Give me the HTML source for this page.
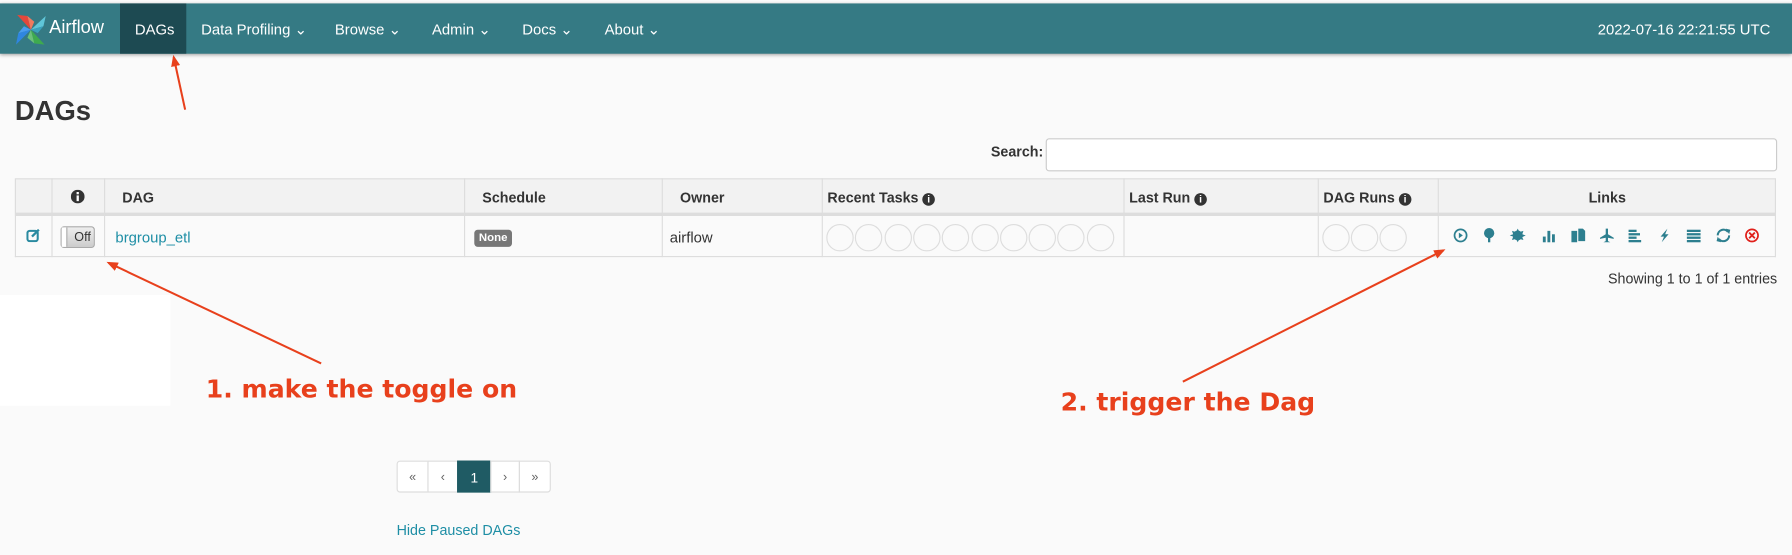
<!DOCTYPE html>
<html><head><meta charset="utf-8">
<style>
html,body{margin:0;padding:0;width:1792px;height:555px;overflow:hidden;background:#fafafa;font-family:"Liberation Sans",Arial,sans-serif}
#w{position:absolute;left:0;top:0;width:1568px;height:486px;transform:scale(1.142857);transform-origin:0 0;background:#fafafa}
.a{position:absolute}
.nav{left:0;top:3px;width:1568px;height:44px;background:#357a84;box-shadow:0 1px 3px rgba(0,0,0,.35)}
.ni{color:#fff;font-size:13px;top:18px}
.th{font-size:12.5px;font-weight:bold;color:#333;top:166px}
.c{position:absolute;width:22px;height:22px;border:1px solid #ddd;border-radius:50%;top:196px;background:#fafafa}
.pg{position:absolute;top:403px;height:28px;border:1px solid #ddd;background:#fff;color:#666;font-size:11px;text-align:center;line-height:28px;box-sizing:border-box}
.red{color:#e8401c;font-weight:bold;font-size:22px;font-family:"DejaVu Sans",sans-serif}
</style></head><body><div id="w">
<div class="a nav"></div>
<svg class="a" style="left:12px;top:11px" width="30" height="30" viewBox="0 0 30 30">
<path d="M15 15 L3 2 L12 3 Z" fill="#e4473a"/><path d="M15 15 L28 3 L26 12 Z" fill="#5fc6d8"/><path d="M15 15 L27 28 L18 27 Z" fill="#3eaa4f"/><path d="M15 15 L2 28 L4 18 Z" fill="#2f86e0"/>
<path d="M15 15 L12 3 L18 8 Z" fill="#f07a5f"/><path d="M15 15 L26 12 L21 18 Z" fill="#3aa2bd"/><path d="M15 15 L18 27 L12 22 Z" fill="#6cc07a"/><path d="M15 15 L4 18 L9 12 Z" fill="#4a9df0"/>
</svg>
<div class="a" style="left:43px;top:16px;color:#fff;font-size:16px">Airflow</div>
<div class="a" style="left:105px;top:3px;width:58px;height:44px;background:#1d4a52"></div>
<div class="a ni" style="left:118px">DAGs</div>
<div class="a ni" style="left:176px">Data Profiling ⌄</div>
<div class="a ni" style="left:293px">Browse ⌄</div>
<div class="a ni" style="left:378px">Admin ⌄</div>
<div class="a ni" style="left:457px">Docs ⌄</div>
<div class="a ni" style="left:529px">About ⌄</div>
<div class="a ni" style="left:1398px">2022-07-16 22:21:55 UTC</div>

<div class="a" style="left:13px;top:84px;font-size:24px;font-weight:bold;color:#333">DAGs</div>
<div class="a" style="left:867px;top:126px;font-size:12.5px;font-weight:bold;color:#333">Search:</div>
<div class="a" style="left:915px;top:121px;width:638px;height:27px;border:1px solid #ccc;border-radius:3px;background:#fff"></div>

<div class="a" style="left:13px;top:156px;width:1541px;height:33px;background:#f2f2f2;border:1px solid #ddd;border-bottom:3px solid #ddd;box-sizing:border-box"></div>
<div class="a" style="left:13px;top:189px;width:1541px;height:36px;background:#fafafa;border:1px solid #ddd;border-top:0;box-sizing:border-box"></div>
<div class="a" style="left:45px;top:156px;width:1px;height:69px;background:#ddd"></div>
<div class="a" style="left:91px;top:156px;width:1px;height:69px;background:#ddd"></div>
<div class="a" style="left:406px;top:156px;width:1px;height:69px;background:#ddd"></div>
<div class="a" style="left:579px;top:156px;width:1px;height:69px;background:#ddd"></div>
<div class="a" style="left:719px;top:156px;width:1px;height:69px;background:#ddd"></div>
<div class="a" style="left:983px;top:156px;width:1px;height:69px;background:#ddd"></div>
<div class="a" style="left:1153px;top:156px;width:1px;height:69px;background:#ddd"></div>
<div class="a" style="left:1258px;top:156px;width:1px;height:69px;background:#ddd"></div>
<svg class="a" style="left:62px;top:166px" width="12" height="12"><circle cx="6" cy="6" r="6" fill="#333"/><rect x="5" y="5" width="2" height="5" fill="#fff"/><rect x="5" y="2" width="2" height="2" fill="#fff"/></svg>
<div class="a th" style="left:107px">DAG</div>
<div class="a th" style="left:422px">Schedule</div>
<div class="a th" style="left:595px">Owner</div>
<div class="a th" style="left:724px">Recent Tasks <span style="display:inline-block;width:11px;height:11px;border-radius:50%;background:#333;color:#fff;font-size:9px;text-align:center;line-height:11px">i</span></div>
<div class="a th" style="left:988px">Last Run <span style="display:inline-block;width:11px;height:11px;border-radius:50%;background:#333;color:#fff;font-size:9px;text-align:center;line-height:11px">i</span></div>
<div class="a th" style="left:1158px">DAG Runs <span style="display:inline-block;width:11px;height:11px;border-radius:50%;background:#333;color:#fff;font-size:9px;text-align:center;line-height:11px">i</span></div>
<div class="a th" style="left:1390px">Links</div>

<svg class="a" style="left:23px;top:200px" width="13" height="12"><rect x="1" y="2" width="9" height="9" rx="2" fill="none" stroke="#2a8aa0" stroke-width="1.8"/><path d="M5 7 L11 1" stroke="#2a8aa0" stroke-width="2"/></svg>
<div class="a" style="left:53px;top:198px;width:30px;height:19px;border:1px solid #aaa;border-radius:3px;background:linear-gradient(#eee,#ccc);box-sizing:border-box"><div style="position:absolute;left:0;top:0;width:4px;height:17px;background:#fff;border-right:1px solid #aaa"></div><span style="position:absolute;left:11px;top:3px;font-size:11px;color:#333">Off</span></div>
<div class="a" style="left:101px;top:200px;font-size:13px;color:#1e8ea5">brgroup_etl</div>
<div class="a" style="left:415px;top:201px;width:33px;height:15px;background:#777;border-radius:3px;color:#fff;font-size:10px;font-weight:bold;text-align:center;line-height:15px">None</div>
<div class="a" style="left:586px;top:200px;font-size:13px;color:#333">airflow</div>
<div class="c" style="left:723px"></div><div class="c" style="left:748px"></div><div class="c" style="left:774px"></div><div class="c" style="left:799px"></div><div class="c" style="left:824px"></div><div class="c" style="left:850px"></div><div class="c" style="left:875px"></div><div class="c" style="left:900px"></div><div class="c" style="left:925px"></div><div class="c" style="left:951px"></div>
<div class="c" style="left:1157px"></div><div class="c" style="left:1182px"></div><div class="c" style="left:1207px"></div>

<svg class="a" style="left:1270px;top:199px" width="270" height="14" viewBox="0 0 270 14" fill="#2d7f8f">
<circle cx="8" cy="7" r="5.3" fill="none" stroke="#2d7f8f" stroke-width="1.5"/><path d="M6.5 4.5 L10 7 L6.5 9.5Z"/>
<circle cx="33" cy="5" r="4.5"/><rect x="32" y="8" width="2" height="5"/>
<circle cx="58" cy="7" r="4.3"/><path d="M58 1 L59.5 4 L63 3 L62 6 L65 7 L62 8.5 L63 11 L59.5 10 L58 13 L56.5 10 L53 11 L54 8 L51 7 L54 6 L53 3 L56.5 4Z"/>
<rect x="80" y="8" width="2.5" height="5"/><rect x="84" y="3" width="2.5" height="10"/><rect x="88" y="6" width="2.5" height="7"/>
<path d="M105 3 L110 3 L110 13 L105 13Z"/><path d="M111 1 L115 1 L117 3 L117 12 L111 12Z"/>
<path d="M135 1 L137 1 L137 6 L142 9 L142 10 L137 9 L137 12 L139 13 L133 13 L135 12 L135 9 L130 10 L130 9 L135 6Z"/>
<rect x="155" y="2" width="7" height="2"/><rect x="155" y="5" width="10" height="2"/><rect x="155" y="8" width="7" height="2"/><rect x="155" y="11" width="11" height="2"/>
<path d="M189 1 L183 8 L186 8 L184 13 L190 6 L187 6Z"/>
<rect x="206" y="2" width="12" height="2"/><rect x="206" y="5" width="12" height="2"/><rect x="206" y="8" width="12" height="2"/><rect x="206" y="11" width="12" height="2"/>
<path d="M233 7 A5 5 0 0 1 242 4 M243 7 A5 5 0 0 1 234 10" fill="none" stroke="#2d7f8f" stroke-width="1.8"/><path d="M240 1 L244 2 L243 6Z"/><path d="M236 13 L232 12 L233 8Z"/>
<circle cx="263" cy="7" r="5.3" fill="none" stroke="#e0201a" stroke-width="1.5"/><path d="M260.5 4.5 L265.5 9.5 M265.5 4.5 L260.5 9.5" stroke="#e0201a" stroke-width="1.6"/>
</svg>

<div class="a" style="left:1407px;top:237px;font-size:12.5px;color:#333">Showing 1 to 1 of 1 entries</div>
<div class="a" style="left:0;top:258px;width:149px;height:97px;background:#fff"></div>

<div class="a red" style="left:180px;top:329px">1. make the toggle on</div>
<div class="a red" style="left:928px;top:340px">2. trigger the Dag</div>
<svg class="a" style="left:0;top:0" width="1568" height="486">
<defs><marker id="m" markerWidth="10" markerHeight="10" refX="8" refY="5" orient="auto" markerUnits="userSpaceOnUse"><path d="M0 1 L10 5 L0 9Z" fill="#e8401c"/></marker></defs>
<g stroke="#e8401c" stroke-width="1.8" marker-end="url(#m)">
<line x1="162" y1="96" x2="152" y2="50"/>
<line x1="281" y1="318" x2="95" y2="230"/>
<line x1="1035" y1="334" x2="1263" y2="219"/>
</g></svg>

<div class="pg" style="left:347px;width:28px;border-radius:3px 0 0 3px">«</div>
<div class="pg" style="left:374px;width:27px">‹</div>
<div class="pg" style="left:400px;width:30px;background:#1f5b64;border-color:#1f5b64;color:#fff;font-size:12px">1</div>
<div class="pg" style="left:429px;width:26px">›</div>
<div class="pg" style="left:454px;width:28px;border-radius:0 3px 3px 0">»</div>
<div class="a" style="left:347px;top:457px;font-size:12.5px;color:#1e8ea5">Hide Paused DAGs</div>
</div></body></html>
